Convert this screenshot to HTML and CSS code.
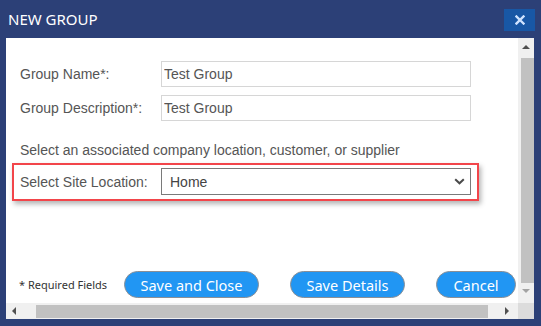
FILE: index.html
```html
<!DOCTYPE html>
<html lang="en">
<head>
    <meta charset="UTF-8">
    <title>New Group</title>
    <link rel="stylesheet" href="styles.css">
</head>
<body>
    <div class="dialog">
        <div class="titlebar">
            <span class="title">NEW GROUP</span>
            <button class="close-btn" aria-label="Close">
                <svg width="10" height="10" viewBox="0 0 10 10"><path d="M1.5 1.5 L8.5 8.5 M8.5 1.5 L1.5 8.5" stroke="#cfe3ff" stroke-width="2.4" stroke-linecap="square"/></svg>
            </button>
        </div>
        <div class="frame">
            <div class="pane">
                <div class="form-row">
                    <label for="groupName">Group Name*:</label>
                    <input id="groupName" type="text" value="Test Group">
                </div>
                <div class="form-row">
                    <label for="groupDesc">Group Description*:</label>
                    <input id="groupDesc" type="text" value="Test Group">
                </div>
                <p class="hint">Select an associated company location, customer, or supplier</p>
                <div class="site-box">
                    <label for="siteLocation">Select Site Location:</label>
                    <div class="select-wrap">
                        <select id="siteLocation">
                            <option>Home</option>
                        </select>
                        <svg class="chevron" width="11" height="7" viewBox="0 0 11 7"><path d="M1.2 1.2 L5.5 5.3 L9.8 1.2" fill="none" stroke="#4a4a4a" stroke-width="2"/></svg>
                    </div>
                </div>
                <div class="footer">
                    <span class="required">* Required Fields</span>
                    <button class="btn btn-close">Save and Close</button>
                    <button class="btn btn-details">Save Details</button>
                    <button class="btn btn-cancel">Cancel</button>
                </div>
            </div>
            <div class="vscroll">
                <div class="arrow arrow-up"></div>
                <div class="vthumb"></div>
                <div class="arrow arrow-down"></div>
            </div>
            <div class="hscroll">
                <div class="arrow arrow-left"></div>
                <div class="hthumb"></div>
                <div class="arrow arrow-right"></div>
            </div>
            <div class="corner"></div>
        </div>
    </div>
</body>
</html>
```

FILE: styles.css
```css
* {
    margin: 0;
    padding: 0;
    box-sizing: border-box;
}
body {
    background: #2c4077;
    font-family: 'Liberation Sans', Arial, sans-serif;
    width: 541px;
    height: 326px;
    overflow: hidden;
}
.dialog {
    height: 326px;
    padding: 0 7px 7px 6px;
    display: flex;
    flex-direction: column;
}
.titlebar {
    height: 38px;
    display: flex;
    align-items: center;
    justify-content: space-between;
}
.title {
    font-family: 'Noto Sans', sans-serif;
    color: #fff;
    font-size: 15px;
    margin-left: 2px;
    margin-top: -1px;
}
.close-btn {
    width: 31px;
    height: 22px;
    background: #1857a5;
    border: none;
    display: flex;
    align-items: center;
    justify-content: center;
    margin-right: -1px;
    margin-top: 2px;
}
.frame {
    flex: 1;
    display: grid;
    grid-template-columns: 1fr 16px;
    grid-template-rows: 1fr 16px;
    background: #fff;
}
.pane {
    padding: 23px 0 0 14px;
    color: #555;
    font-size: 14px;
    overflow: hidden;
}
.form-row {
    display: flex;
    align-items: center;
    margin-bottom: 8px;
}
.form-row label {
    width: 141px;
}
.form-row input {
    width: 310px;
    height: 26px;
    border: 1px solid #d6d6d6;
    padding: 0 2px;
    font-family: 'Liberation Sans', Arial, sans-serif;
    font-size: 14px;
    color: #555;
    outline: none;
}
.hint {
    margin-top: 21px;
    line-height: 16px;
}
.site-box {
    display: flex;
    align-items: center;
    width: 467px;
    height: 38px;
    margin: 5px 0 0 -8px;
    padding: 0 6px 1px;
    border: 2px solid #f2454a;
    box-shadow: 2px 3px 5px rgba(0, 0, 0, 0.3);
}
.site-box label {
    width: 141px;
}
.select-wrap {
    position: relative;
}
.select-wrap select {
    width: 310px;
    height: 27px;
    appearance: none;
    border: 1px solid #7a7a7a;
    border-radius: 0;
    background: #fff;
    padding-left: 8px;
    font-family: 'Liberation Sans', Arial, sans-serif;
    font-size: 14px;
    color: #444;
    outline: none;
}
.chevron {
    position: absolute;
    right: 6px;
    top: 10px;
}
.footer {
    display: flex;
    align-items: center;
    margin-top: 70px;
}
.required {
    font-family: 'Noto Sans', sans-serif;
    font-size: 11px;
    color: #333;
    width: 105px;
    margin-left: -1px;
}
.btn {
    height: 27px;
    border-radius: 14px;
    background: #2196f3;
    border: 1px solid #8a8f96;
    color: #fff;
    font-family: 'Noto Sans', sans-serif;
    font-size: 14.5px;
    margin-right: 31px;
}
.btn-close { width: 135px; }
.btn-details { width: 115px; }
.btn-cancel { width: 80px; margin-right: 0; }
.vscroll {
    background: #f0f0f0;
    display: flex;
    flex-direction: column;
    align-items: center;
}
.vthumb {
    width: 13px;
    height: 225px;
    background: #c1c1c1;
    margin-left: 2px;
}
.hscroll {
    background: #f0f0f0;
    display: flex;
    align-items: center;
}
.hthumb {
    width: 452px;
    height: 13px;
    background: #c1c1c1;
    margin-top: 1px;
}
.corner {
    background: #dcdcdc;
}
.arrow {
    width: 0;
    height: 0;
    border-style: solid;
    border-color: transparent;
}
.arrow-up {
    margin: 7px 0 9px;
    border-width: 0 4px 4px;
    border-bottom-color: #505050;
}
.arrow-down {
    margin-top: 6px;
    border-width: 4px 4px 0;
    border-top-color: #a3a3a3;
}
.arrow-left {
    margin: 0 20px 0 6px;
    border-width: 4px 4px 4px 0;
    border-right-color: #505050;
}
.arrow-right {
    margin-left: 17px;
    border-width: 4px 0 4px 4px;
    border-left-color: #505050;
}
```
